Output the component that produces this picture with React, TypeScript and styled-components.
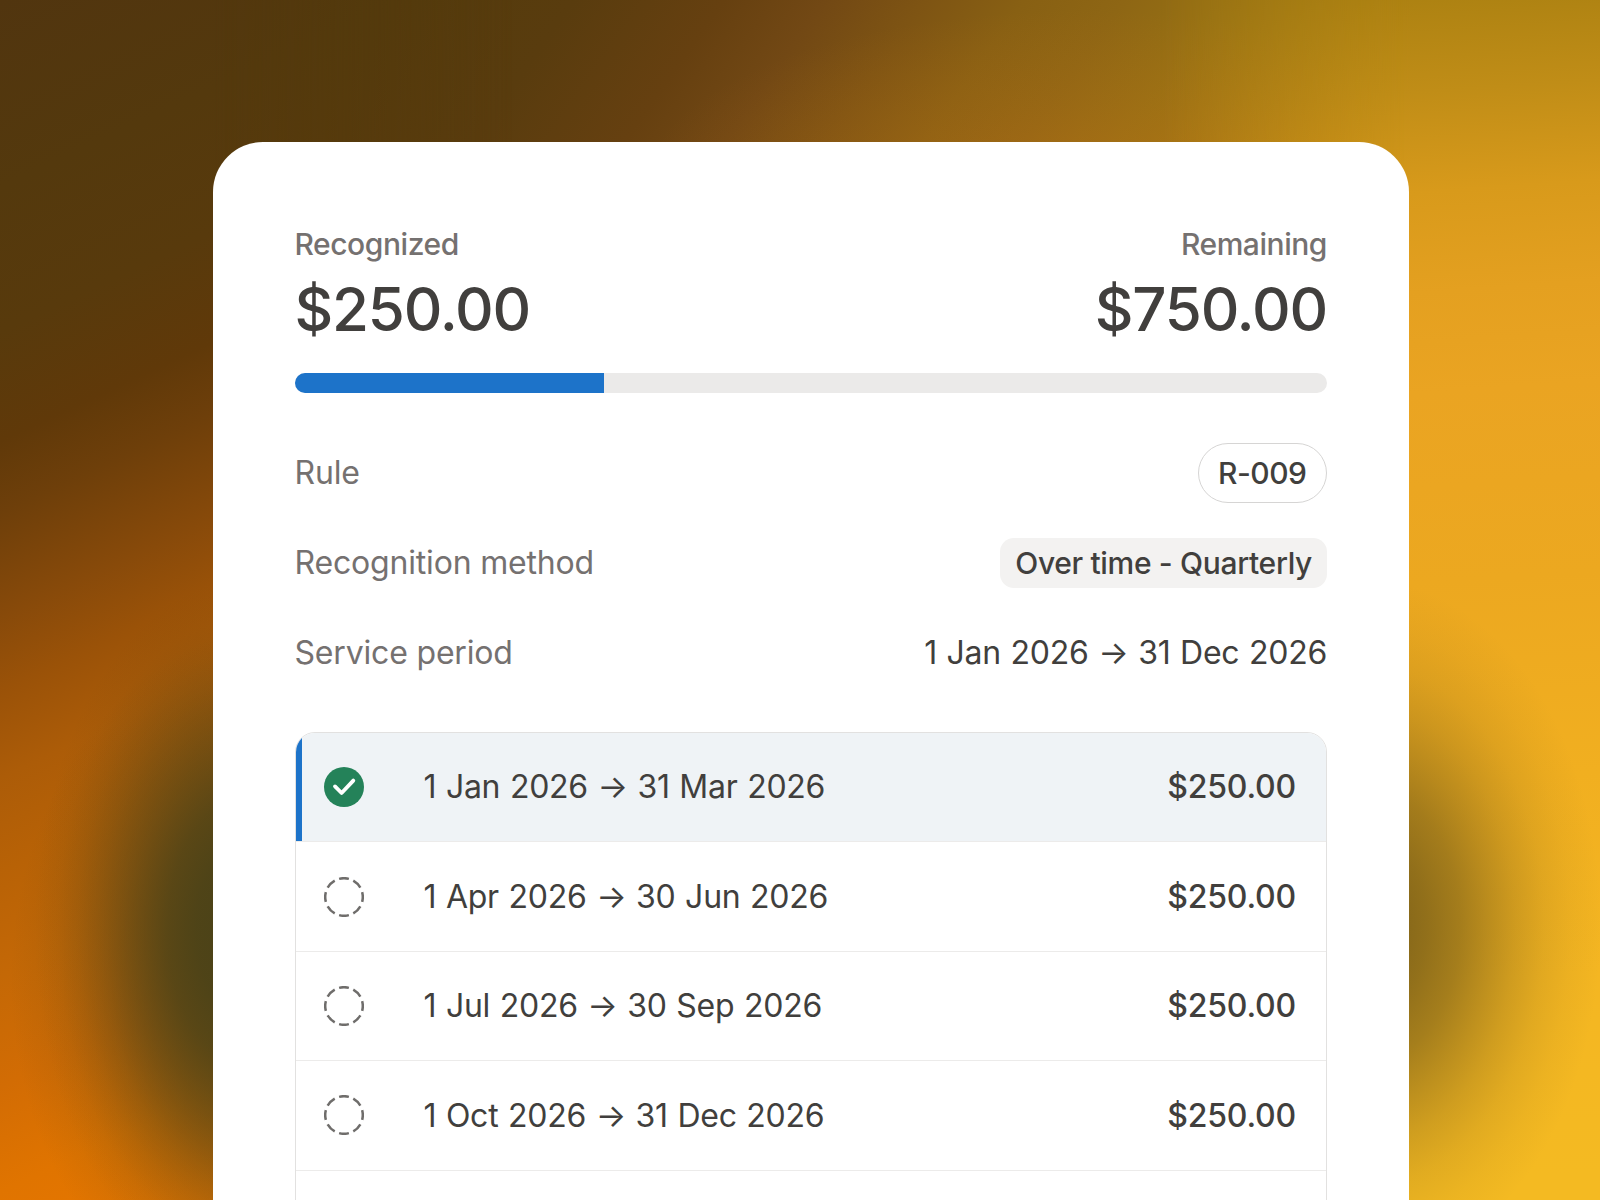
import React from "react";
import styled, { createGlobalStyle } from "styled-components";

const GlobalStyle = createGlobalStyle`
  * {
    box-sizing: border-box;
  }
  body {
    margin: 0;
    font-family: Inter, "Liberation Sans", sans-serif;
    -webkit-font-smoothing: antialiased;
  }
`;

const Backdrop = styled.main`
  position: relative;
  height: 1200px;
  overflow: hidden;
  display: flex;
  padding: 142px 191px 0 213px;
  background:
    radial-gradient(ellipse 440px 180px at 1080px 190px, rgba(196, 110, 22, 0.4) 0%, rgba(196, 110, 22, 0.18) 50%, rgba(196, 110, 22, 0) 100%),
    linear-gradient(125deg, #50340e 0, #523a0c 164px, #543b0c 328px, #593c0e 470px, #664010 593px, #724814 675px, #7e5413 757px, #886013 839px, #8e6614 921px, #967014 1003px, #a07814 1085px, #ac8012 1167px, #b88814 1310px, #d09418 1420px) 0 0 / 1600px 300px no-repeat;

  &::before,
  &::after {
    content: "";
    position: absolute;
    top: 0;
    bottom: 0;
  }
  &::before {
    left: 0;
    width: 513px;
    background:
      radial-gradient(ellipse 195px 325px at 245px 930px, #4a4218 0%, rgba(74, 66, 24, 0.93) 25%, rgba(74, 66, 24, 0.8) 40%, rgba(74, 66, 24, 0.62) 52%, rgba(74, 66, 24, 0.44) 64%, rgba(74, 66, 24, 0.28) 75%, rgba(74, 66, 24, 0.14) 86%, rgba(74, 66, 24, 0.05) 96%, rgba(74, 66, 24, 0) 108%),
      radial-gradient(ellipse 290px 360px at 300px 980px, rgba(80, 68, 22, 0.75) 0%, rgba(80, 68, 22, 0.52) 35%, rgba(80, 68, 22, 0.24) 65%, rgba(80, 68, 22, 0) 100%),
      linear-gradient(155deg, #51350f 0, #54390d 170px, #583a0c 300px, #603909 400px, #6e3f0a 465px, #884a0a 560px, #9a5208 625px, #ac5c08 705px, #b86206 790px, #c46806 885px, #d26c04 985px, #e07400 1080px, #e67600 1160px);
    mask-image: linear-gradient(90deg, #000 213px, transparent 513px);
  }
  &::after {
    right: 0;
    width: 440px;
    background:
      radial-gradient(ellipse 220px 325px at 208px 925px, #7e6219 0%, rgba(126, 98, 25, 0.93) 15%, rgba(126, 98, 25, 0.83) 27%, rgba(126, 98, 25, 0.67) 42%, rgba(126, 98, 25, 0.48) 55%, rgba(126, 98, 25, 0.31) 67%, rgba(126, 98, 25, 0.16) 80%, rgba(126, 98, 25, 0.07) 92%, rgba(126, 98, 25, 0) 106%),
      linear-gradient(176deg, #aa8011 0, #c08d17 110px, #d89a1b 210px, #e4a020 310px, #eaa422 410px, #eca820 600px, #f1af20 800px, #f4b622 1000px, #f4ba22 1200px);
    mask-image: linear-gradient(90deg, transparent, #000 249px);
  }
`;

const Card = styled.section`
  position: relative;
  z-index: 1;
  flex: 1;
  height: 1100px;
  padding: 81px 82px 0 81.5px;
  border-radius: 50px 50px 0 0;
  background: #fff;
  color: #413f3d;
`;

const Totals = styled.div`
  display: flex;
  justify-content: space-between;
`;

const Total = styled.div<{ $end?: boolean }>`
  display: flex;
  flex-direction: column;
  align-items: ${({ $end }) => ($end ? "flex-end" : "flex-start")};
`;

const TotalLabel = styled.span`
  font-size: 30px;
  font-weight: 500;
  line-height: 42px;
  letter-spacing: -0.45px;
  color: #757170;
`;

const TotalValue = styled.span`
  font-size: 60px;
  font-weight: 500;
  line-height: 88px;
  letter-spacing: -1.2px;
`;

const Progress = styled.div`
  height: 20px;
  margin-top: 20px;
  border-radius: 10px;
  overflow: hidden;
  background: #ebeae9;
`;

const ProgressFill = styled.div`
  height: 100%;
  background: #1d73c9;
`;

const Details = styled.dl`
  margin: 35px 0 0;
`;

const Detail = styled.div`
  display: flex;
  align-items: center;
  justify-content: space-between;
  height: 90px;
  font-size: 32px;
`;

const DetailLabel = styled.dt`
  padding-bottom: 2px;
  letter-spacing: -0.18px;
  color: #757170;
`;

const DetailValue = styled.dd<{ $text?: boolean }>`
  margin: 0;
  padding-bottom: ${({ $text }) => ($text ? "2px" : "0")};
`;

const DateRange = styled.span`
  letter-spacing: -0.26px;
  word-spacing: 0.9px;
`;

const Pill = styled.span`
  display: flex;
  align-items: center;
  height: 60px;
  padding: 0 19.5px;
  border: 1px solid #d6d5d4;
  border-radius: 30px;
  font-size: 30px;
  font-weight: 500;
  letter-spacing: -0.5px;
`;

const Tag = styled.span`
  display: flex;
  align-items: center;
  height: 50px;
  padding: 0 15px;
  border-radius: 14px;
  background: #f3f2f1;
  font-size: 30px;
  font-weight: 500;
  letter-spacing: -0.33px;
`;

const Schedule = styled.ul`
  height: 600px;
  margin: 34px 0 0;
  padding: 0;
  list-style: none;
  border: 1px solid #e2e1e0;
  border-radius: 20px;
  overflow: hidden;
`;

const Period = styled.li<{ $active?: boolean }>`
  display: grid;
  grid-template-columns: 40px 1fr auto;
  column-gap: 60px;
  align-items: center;
  height: 109.4px;
  padding: 0 30px ${({ $active }) => ($active ? "1px" : "0")} 28px;
  border-bottom: 1px solid #ecebea;
  font-size: 32px;
  background: ${({ $active }) => ($active ? "#eff3f6" : "#fff")};
  box-shadow: ${({ $active }) => ($active ? "inset 6px 0 0 #1d73c9" : "none")};
`;

const Amount = styled.span`
  font-weight: 500;
  letter-spacing: -0.2px;
`;

const DoneIcon = () => (
  <svg width="40" height="40" viewBox="0 0 40 40" fill="none">
    <circle cx="20" cy="20" r="20" fill="#248259" />
    <path
      d="M11 19.4 17.6 26 29.3 13.6"
      stroke="#fff"
      strokeWidth="3.8"
      strokeLinecap="round"
      strokeLinejoin="round"
    />
  </svg>
);

const PendingIcon = () => (
  <svg width="40" height="40" viewBox="0 0 40 40" fill="none">
    <circle
      cx="20"
      cy="20"
      r="18.8"
      pathLength="80"
      stroke="#6f6d6b"
      strokeWidth="2.5"
      strokeDasharray="6.8 3.2"
      strokeDashoffset="3.4"
    />
  </svg>
);

const periods = [
  { range: "1 Jan 2026 → 31 Mar 2026", amount: "$250.00", done: true },
  { range: "1 Apr 2026 → 30 Jun 2026", amount: "$250.00", done: false },
  { range: "1 Jul 2026 → 30 Sep 2026", amount: "$250.00", done: false },
  { range: "1 Oct 2026 → 31 Dec 2026", amount: "$250.00", done: false }
];

const App = () => {
  const progress = 30;

  return (
    <>
      <GlobalStyle />
      <Backdrop>
        <Card>
          <Totals>
            <Total>
              <TotalLabel>Recognized</TotalLabel>
              <TotalValue>$250.00</TotalValue>
            </Total>
            <Total $end>
              <TotalLabel>Remaining</TotalLabel>
              <TotalValue>$750.00</TotalValue>
            </Total>
          </Totals>
          <Progress>
            <ProgressFill style={{ width: `${progress}%` }} />
          </Progress>
          <Details>
            <Detail>
              <DetailLabel>Rule</DetailLabel>
              <DetailValue>
                <Pill>R-009</Pill>
              </DetailValue>
            </Detail>
            <Detail>
              <DetailLabel>Recognition method</DetailLabel>
              <DetailValue>
                <Tag>Over time - Quarterly</Tag>
              </DetailValue>
            </Detail>
            <Detail>
              <DetailLabel>Service period</DetailLabel>
              <DetailValue $text>
                <DateRange>1 Jan 2026 → 31 Dec 2026</DateRange>
              </DetailValue>
            </Detail>
          </Details>
          <Schedule>
            {periods.map(({ range, amount, done }) => (
              <Period key={range} $active={done}>
                {done ? <DoneIcon /> : <PendingIcon />}
                <DateRange>{range}</DateRange>
                <Amount>{amount}</Amount>
              </Period>
            ))}
          </Schedule>
        </Card>
      </Backdrop>
    </>
  );
};

export default App;
